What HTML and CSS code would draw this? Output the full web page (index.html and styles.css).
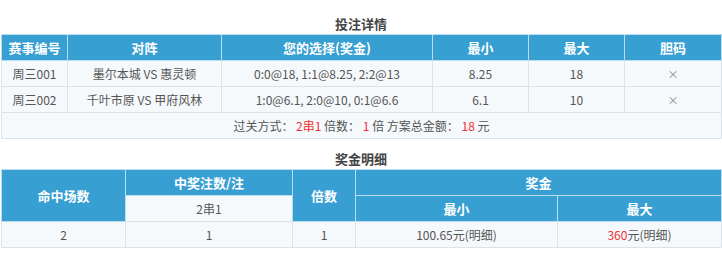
FILE: index.html
```html
<!DOCTYPE html>
<html lang="zh">
<head>
<meta charset="utf-8">
<link rel="stylesheet" href="styles.css">
</head>
<body>
<div class="page">
  <div class="title first">投注详情</div>
  <table class="grid">
    <colgroup>
      <col style="width:66px"><col style="width:154px"><col style="width:211px"><col style="width:96px"><col style="width:96px"><col style="width:97px">
    </colgroup>
    <tr class="head">
      <th>赛事编号</th><th>对阵</th><th>您的选择(奖金)</th><th>最小</th><th>最大</th><th>胆码</th>
    </tr>
    <tr>
      <td>周三001</td><td>墨尔本城 VS 惠灵顿</td><td>0:0@18, 1:1@8.25, 2:2@13</td><td>8.25</td><td>18</td><td class="x">×</td>
    </tr>
    <tr>
      <td>周三002</td><td>千叶市原 VS 甲府风林</td><td>1:0@6.1, 2:0@10, 0:1@6.6</td><td>6.1</td><td>10</td><td class="x">×</td>
    </tr>
    <tr class="foot">
      <td colspan="6">过关方式： <span class="red">2串1</span> 倍数： <span class="red">1</span> 倍 方案总金额： <span class="red">18</span> 元</td>
    </tr>
  </table>
  <div class="title second">奖金明细</div>
  <table class="grid">
    <colgroup>
      <col style="width:124px"><col style="width:167px"><col style="width:63px"><col style="width:202px"><col style="width:164px">
    </colgroup>
    <tr class="head">
      <th rowspan="2">命中场数</th><th>中奖注数/注</th><th rowspan="2">倍数</th><th colspan="2">奖金</th>
    </tr>
    <tr class="head">
      <td class="sub">2串1</td><th>最小</th><th>最大</th>
    </tr>
    <tr>
      <td>2</td><td>1</td><td>1</td><td>100.65元(明细)</td><td><span class="red">360</span>元(明细)</td>
    </tr>
  </table>
</div>
</body>
</html>
```
FILE: styles.css
```css
html, body {
  margin: 0;
  padding: 0;
  background: #ffffff;
}
body {
  font-family: "Noto Sans CJK SC", "Noto Sans", sans-serif;
  font-size: 12px;
  color: #555555;
}
.page {
  width: 720px;
  margin-left: 1px;
}
.title {
  text-align: center;
  font-size: 13px;
  font-weight: bold;
  color: #444444;
  line-height: 20px;
}
.title.first {
  padding-top: 14px;
  height: 20px;
}
.title.second {
  padding-top: 10px;
  height: 20px;
}
.grid {
  width: 720px;
  border-collapse: collapse;
  table-layout: fixed;
  border: 1px solid #b9d6ec;
}
.grid th, .grid td {
  height: 25px;
  padding: 0;
  text-align: center;
  vertical-align: middle;
  border: 1px solid #dbe3ea;
  background: #f5f9fc;
  line-height: 16px;
  white-space: nowrap;
}
.grid th {
  background: #389fd2;
  color: #ffffff;
  font-weight: bold;
  font-size: 13px;
  border-color: #bcdcef;
}
.grid td.sub {
  background: #f5f9fc;
  color: #555555;
  font-size: 12px;
}
.x {
  color: #888888;
  font-size: 11px;
}
.red {
  color: #f23030;
}
.foot td {
  font-size: 12px;
}
```
